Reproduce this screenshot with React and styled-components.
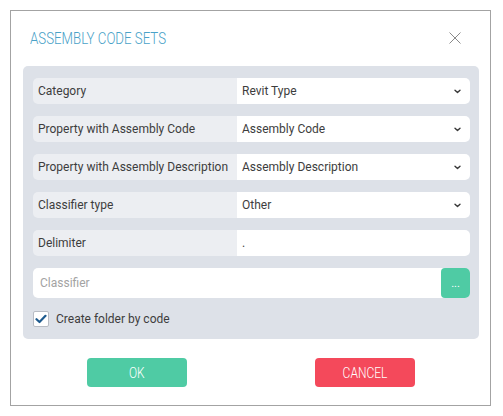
import React from "react";
import styled, { createGlobalStyle } from "styled-components";

const GlobalStyle = createGlobalStyle`
  html, body {
    margin: 0;
    padding: 0;
    background: #ffffff;
  }
  body {
    font-family: Roboto, "Noto Sans", sans-serif;
  }
`;

const fields = [
  { label: "Category", value: "Revit Type", select: true },
  { label: "Property with Assembly Code", value: "Assembly Code", select: true },
  {
    label: "Property with Assembly Description",
    value: "Assembly Description",
    select: true,
  },
  { label: "Classifier type", value: "Other", select: true },
  { label: "Delimiter", value: ".", select: false },
];

const Chevron = () => (
  <svg width="7" height="5" viewBox="0 0 7 5">
    <path
      d="M1 1.2 L3.5 3.6 L6 1.2"
      fill="none"
      stroke="#3a3a3a"
      strokeWidth="1.4"
      strokeLinecap="round"
      strokeLinejoin="round"
    />
  </svg>
);

const CloseIcon = () => (
  <svg width="12" height="12" viewBox="0 0 12 12">
    <path d="M0.5 0.5 L11.5 11.5 M11.5 0.5 L0.5 11.5" stroke="#8a8a8a" strokeWidth="1" />
  </svg>
);

const Check = () => (
  <svg width="12" height="10" viewBox="0 0 12 10">
    <path
      d="M1.5 5.2 L4.5 8 L10.5 1.8"
      fill="none"
      stroke="#1d5a8e"
      strokeWidth="2.2"
      strokeLinecap="round"
      strokeLinejoin="round"
    />
  </svg>
);

const App = () => {
  return (
    <>
      <GlobalStyle />
      <Page>
        <Dialog>
          <Header>
            <Title>ASSEMBLY CODE SETS</Title>
            <CloseButton>
              <CloseIcon />
            </CloseButton>
          </Header>
          <Panel>
            {fields.map((f) => (
              <Row key={f.label}>
                <Label>{f.label}</Label>
                <Value>
                  <span>{f.value}</span>
                  {f.select && <Chevron />}
                </Value>
              </Row>
            ))}
            <ClassifierRow>
              <Placeholder>Classifier</Placeholder>
              <BrowseButton>...</BrowseButton>
            </ClassifierRow>
            <CheckRow>
              <CheckBox>
                <Check />
              </CheckBox>
              <span>Create folder by code</span>
            </CheckRow>
          </Panel>
          <Footer>
            <ActionButton $bg="#4fcba4">
              <ButtonText>OK</ButtonText>
            </ActionButton>
            <ActionButton $bg="#f4495b">
              <ButtonText>CANCEL</ButtonText>
            </ActionButton>
          </Footer>
        </Dialog>
      </Page>
    </>
  );
};

const Page = styled.div`
  padding: 10px 12px 10px 10px;
`;

const Dialog = styled.div`
  box-sizing: border-box;
  width: 481px;
  height: 396px;
  border: 1px solid #a3a3a3;
  padding: 0 11px 0 12px;
  display: flex;
  flex-direction: column;
`;

const Header = styled.div`
  height: 55px;
  display: flex;
  align-items: center;
  justify-content: space-between;
  padding: 0 18px 0 7px;
`;

const Title = styled.div`
  font-family: Roboto, sans-serif;
  font-weight: 300;
  font-size: 17px;
  color: #4aa2c8;
  transform: scaleX(0.78);
  transform-origin: left center;
  white-space: nowrap;
  margin-top: -2px;
`;

const CloseButton = styled.div`
  display: flex;
  align-items: center;
  margin-top: -2px;
`;

const Panel = styled.div`
  background: #dde1e8;
  border-radius: 5px;
  padding: 12px 9px 12px 10px;
  display: flex;
  flex-direction: column;
  gap: 12px;
`;

const Row = styled.div`
  height: 26px;
  display: flex;
  border-radius: 5px;
  overflow: hidden;
  font-size: 12px;
  color: #3d3d3d;
`;

const Label = styled.div`
  width: 204px;
  flex-shrink: 0;
  background: #eceef2;
  display: flex;
  align-items: center;
  padding-left: 5px;
  box-sizing: border-box;
  white-space: nowrap;
`;

const Value = styled.div`
  flex: 1;
  background: #ffffff;
  display: flex;
  align-items: center;
  justify-content: space-between;
  padding: 0 9px 0 5px;
`;

const ClassifierRow = styled.div`
  height: 30px;
  display: flex;
  border-radius: 5px;
  overflow: hidden;
  background: #ffffff;
`;

const Placeholder = styled.div`
  flex: 1;
  display: flex;
  align-items: center;
  padding-left: 7px;
  font-size: 12px;
  color: #a3a3a3;
`;

const BrowseButton = styled.div`
  width: 29px;
  background: #4fcba4;
  color: #ffffff;
  font-size: 11px;
  display: flex;
  align-items: center;
  justify-content: center;
  border-radius: 4px 0 0 4px;
`;

const CheckRow = styled.div`
  display: flex;
  align-items: center;
  gap: 7px;
  font-size: 12px;
  color: #3d3d3d;
  height: 17px;
`;

const CheckBox = styled.div`
  box-sizing: border-box;
  width: 16px;
  height: 16px;
  border: 1px solid #b8bcc4;
  border-radius: 2px;
  background: #ffffff;
  display: flex;
  align-items: center;
  justify-content: center;
`;

const Footer = styled.div`
  flex: 1;
  display: grid;
  grid-template-columns: 1fr 1fr;
  justify-items: center;
  align-items: start;
  padding-top: 19px;
`;

const ActionButton = styled.div`
  width: 100px;
  height: 29px;
  border-radius: 4px;
  background: ${(p) => p.$bg};
  display: flex;
  align-items: center;
  justify-content: center;
`;

const ButtonText = styled.span`
  color: #ffffff;
  font-size: 15px;
  font-weight: 300;
  transform: scaleX(0.8);
  white-space: nowrap;
`;

export default App;
